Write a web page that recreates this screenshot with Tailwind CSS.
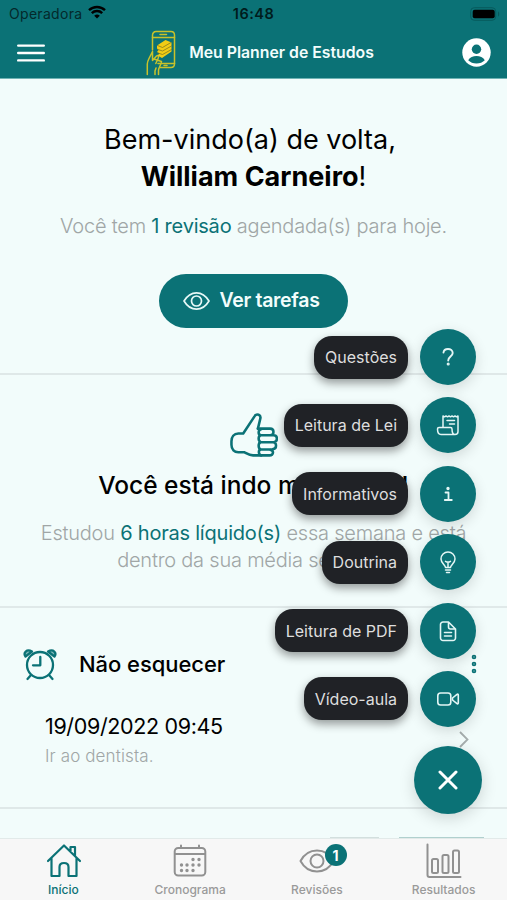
<!DOCTYPE html>
<html lang="pt-BR">
<head>
    <meta charset="UTF-8">
    <meta name="viewport" content="width=device-width, initial-scale=1.0">
    <title>Meu Planner de Estudos</title>
    <script src="https://cdn.jsdelivr.net/npm/@tailwindcss/browser@4"></script>
</head>
<body class="bg-[#f2fcfb] font-['Inter',sans-serif] text-black">
    <div class="relative flex flex-col h-[900px] w-[507px] overflow-hidden">

        <header class="h-[79px] shrink-0 bg-[#0b7276] border-b border-[#6fb3b4]">
            <!-- Status bar -->
            <div class="grid grid-cols-3 items-center h-[27px] pl-[9px] pr-[6px] text-[14px]">
                <div class="flex items-center gap-[6px] text-[#04292b] tracking-[0.3px]">
                    <span>Operadora</span>
                    <svg class="w-[18px] h-[14px] -mt-[3px]" viewBox="0 0 18 14" fill="none" stroke="#000" stroke-width="2.4">
                        <path d="M1 5.2a11.5 11.5 0 0 1 16 0M3.8 8.2a7.4 7.4 0 0 1 10.4 0"/>
                        <path d="M9 13.5 6.2 10.8a4 4 0 0 1 5.6 0z" fill="#000" stroke="none"/>
                    </svg>
                </div>
                <div class="text-center pr-[3px] text-[14.500px] tracking-[0.5px] font-semibold text-[#001c1d]">16:48</div>
                <svg class="justify-self-end w-[31px] h-[14px]" viewBox="0 0 31 14">
                    <rect x=".7" y=".7" width="25" height="12.6" rx="3.6" fill="none" stroke="#075a5d"/>
                    <rect x="2.7" y="2.7" width="22" height="8.6" rx="2" fill="#000"/>
                    <path d="M28 4.5c1.6.6 1.6 4.4 0 5z" fill="#075a5d"/>
                </svg>
            </div>
            <!-- Toolbar -->
            <div class="flex items-center justify-between h-[51px] pl-[17px] pr-[16px]">
                <svg class="w-[28px] h-[18px]" viewBox="0 0 28 18" stroke="#fff" stroke-width="2.4" stroke-linecap="round">
                    <path d="M1.2 1.6h25.6M1.2 9h25.6M1.2 16.4h25.6"/>
                </svg>
                <div class="flex items-center gap-[13px] pl-[13px]">
                    <svg class="w-[30px] h-[46px]" viewBox="0 0 30 46" fill="none" stroke="#c9c22a" stroke-width="1.5" stroke-linejoin="round" stroke-linecap="round">
                        <path d="M6.5 20V5.2A3.6 3.6 0 0 1 10 1.5h15A3.6 3.6 0 0 1 28.5 5v29a3.6 3.6 0 0 1-3.6 3.5H14"/>
                        <path d="M6.5 7.5h22M12 33.5h16.5M14 4.5h6.5M18 35.5h3"/>
                        <path d="M1.3 44.5V34c0-2 .7-3.500 1.700-5.500l3.500-7v9M6.500 30.500l4-4.500c1.500-1 2.500.5 1.800 2l-2.500 5.500M8 29l7.500 2.500c-.5 4-3 6-3 9v4M10 38l-1 3v3.500"/>
                        <path d="M11 15.500l8.500-5.500 6 2.500v9L16 28l-4.500-2.500 2-2-2.500-1.500 1.500-2-1.500-1.500z" fill="#f0cc15" stroke="none"/>
                        <path d="M11.500 15.500l5 2 8.500-5M12 19.500l4.500 1.500 9-5M12 23l4.500 1.500 9-5" stroke="#746f20" stroke-width=".7"/>
                    </svg>
                    <h1 class="text-[15.800px] font-semibold text-[#f2fdfc] whitespace-nowrap">Meu Planner de Estudos</h1>
                </div>
                <svg class="w-[29px] h-[29px]" viewBox="0 0 29 29">
                    <circle cx="14.500" cy="14.500" r="14.200" fill="#fff"/>
                    <circle cx="14.500" cy="11.300" r="4.700" fill="#0b7276"/>
                    <path d="M6.200 22.200c1.600-3 4.900-4.200 8.300-4.200s6.700 1.200 8.300 4.200c-2 2-5 3.300-8.300 3.300s-6.300-1.300-8.300-3.300z" fill="#0b7276"/>
                </svg>
            </div>
        </header>

        <main class="flex-1 overflow-hidden">
            <section class="flex flex-col items-center h-[296px] pt-[42px] border-b-2 border-[#dfe8e8]">
                <h2 class="text-[27px] leading-[37px] text-center whitespace-nowrap pr-[7px]">Bem-vindo(a) de volta,</h2>
                <h2 class="text-[27px] leading-[37px] text-center whitespace-nowrap"><b class="font-bold">William Carneiro</b>!</h2>
                <p class="mt-[17px] text-[20px] leading-[28px] tracking-[-0.220px] font-light text-[#a0a6a6] whitespace-nowrap">Você tem <span class="font-normal text-[#0b7276]">1 revisão</span> agendada(s) para hoje.</p>
                <button class="flex items-center justify-center gap-[9px] mt-[34px] w-[189px] h-[54px] pr-[4px] rounded-full bg-[#0b7276] text-[#f2fdfc] text-[19.500px] tracking-[-0.300px] font-semibold">
                    <svg class="w-[27px] h-[20px]" viewBox="0 0 27 20" fill="none" stroke="#e6f8f7" stroke-width="1.700">
                        <path d="M1 10C4 5 8.500 1.800 13.500 1.800S23 5 26 10c-3 5-7.500 8.200-12.500 8.200S4 15 1 10z" stroke-linejoin="round"/>
                        <circle cx="13.500" cy="10" r="5"/>
                    </svg>
                    Ver tarefas
                </button>
            </section>

            <section class="flex flex-col items-center h-[233px] pt-[36px] border-b-2 border-[#e0e9e9]">
                <svg class="w-[49px] h-[48px]" viewBox="0 0 50 48" fill="none" stroke="#0b7276" stroke-width="2.600" stroke-linejoin="round" stroke-linecap="round">
                    <path d="M29.500 17.500 32 7c.8-3.500-3.800-5.500-5.800-2.300L14.500 22.500H9.500c-4.500 0-7 3.500-7 8v3.500c0 5 3 7.500 7 7.500h6c3 1.500 5 3.300 9 3.300h17c4 0 4.500-5 1-5.500"/>
                    <path d="M29.500 17.500H42c4.500 0 4.500 6.800 0 6.800M31 24.300h14.500c4.500 0 4.500 7 0 7M31 31.300h14c4 0 4 7 0 7M31 38.800h13M33 18c-3 0-4 5.500-.5 6.300-3 .7-3 6 0 7-3 .7-3 6.300 0 7.500-3 .5-2.500 5.500.5 6"/>
                </svg>
                <h3 class="mt-[9px] text-[24.500px] leading-[34px] font-medium whitespace-nowrap">Você está indo muito bem!</h3>
                <p class="mt-[18px] text-[20px] leading-[27px] tracking-[-0.220px] font-light text-[#a0a6a6] text-center whitespace-nowrap">Estudou <span class="font-normal text-[#0b7276]">6 horas líquido(s)</span> essa semana e está<br>dentro da sua média semanal.</p>
            </section>

            <section class="h-[201px] pt-[38px] pl-[23px] pr-[30px] border-b-2 border-[#dfe8e8]">
                <div class="flex items-center h-[36px]">
                    <svg class="w-[34px] h-[34px]" viewBox="0 0 34 34" fill="none" stroke="#0b7276" stroke-width="2.300" stroke-linecap="round" stroke-linejoin="round">
                        <circle cx="17" cy="18" r="13"/>
                        <path d="M17.300 10v8.300H10M8 28l-3.500 4M26 28l3.500 4"/>
                        <path d="M2.500 9.500C0 6 3.500 1.500 9 4.500z M31.500 9.500C34 6 30.500 1.500 25 4.500z" fill="#7fb9ba"/>
                    </svg>
                    <h3 class="ml-[22px] text-[22px] font-medium tracking-[-0.060px]">Não esquecer</h3>
                    <svg class="ml-auto w-[6px] h-[20px]" viewBox="0 0 6 20" fill="#7fb9ba" stroke="#0b7276" stroke-width="1.600">
                        <circle cx="3" cy="3" r="1.500"/><circle cx="3" cy="10" r="1.500"/><circle cx="3" cy="17" r="1.500"/>
                    </svg>
                </div>
                <div class="flex items-center justify-between mt-[29px] pl-[22px] pr-[8px]">
                    <div>
                        <p class="text-[21.500px] leading-[30px] tracking-[-0.360px]">19/09/2022 09:45</p>
                        <p class="mt-[3px] text-[17px] leading-[24px] tracking-[0.120px] font-light text-[#a0a6a6]">Ir ao dentista.</p>
                    </div>
                    <svg class="w-[10px] h-[18px]" viewBox="0 0 10 18" fill="none" stroke="#a5adad" stroke-width="1.800"><path d="M1 1 8.500 8.500 1 16"/></svg>
                </div>
            </section>

            <!-- Top edge of the next card -->
            <section class="flex items-end justify-end gap-[20px] h-[29px] pr-[23px]">
                <div class="w-[49px] h-px bg-[#d3dfde]"></div>
                <div class="w-[85px] h-px bg-[#b0d0ce]"></div>
            </section>
        </main>

        <nav class="grid grid-cols-4 h-[62px] shrink-0 bg-[#f7f7f7] border-t border-[#e2eae9] text-[12px] font-medium text-[#9a9a9a]">
            <a class="flex flex-col items-center text-[#0b7276]">
                <svg class="mt-[4px] ml-[2px] w-[36px] h-[36px]" viewBox="0 0 36 36" fill="none" stroke="#0b7276" stroke-width="2.200" stroke-linecap="round" stroke-linejoin="round">
                    <path d="M2 18 18 2.500 34 18M5.500 15v18h8V24c0-3 1.500-4 4.500-4s4.500 1 4.500 4v9h8V15M24.500 8V4h4.500v8.500"/>
                </svg>
                <span class="mt-[3px] leading-[16px]">Início</span>
            </a>
            <a class="flex flex-col items-center">
                <svg class="mt-[4px] w-[36px] h-[36px]" viewBox="0 0 36 36" fill="none" stroke="#919191" stroke-width="2" stroke-linecap="round">
                    <rect x="2.700" y="5" width="30.600" height="27.500" rx="3.500"/>
                    <path d="M3 11h30M9 2.500V5M27 2.500V5"/>
                    <path d="M21 16.500h.01M27 16.500h.01M9.500 22h.01M15 22h.01M21 22h.01M27 22h.01M9.500 27.500h.01M15 27.500h.01M21 27.500h.01" stroke-width="3.400"/>
                </svg>
                <span class="mt-[3px] leading-[16px]">Cronograma</span>
            </a>
            <a class="relative flex flex-col items-center">
                <svg class="mt-[4px] w-[36px] h-[36px]" viewBox="0 0 36 36" fill="none" stroke="#919191" stroke-width="2" stroke-linejoin="round">
                    <path d="M1.500 18C5 11.500 11 7.500 18 7.500s13 4 16.500 10.500C31 24.500 25 28.500 18 28.500S5 24.500 1.500 18z"/>
                    <circle cx="18" cy="18" r="6.500"/>
                </svg>
                <span class="absolute left-[71px] top-[5px] flex items-center justify-center w-[22px] h-[22px] rounded-full bg-[#0b7276] text-[14px] font-bold text-white">1</span>
                <span class="mt-[3px] leading-[16px]">Revisões</span>
            </a>
            <a class="flex flex-col items-center">
                <svg class="mt-[4px] w-[36px] h-[36px]" viewBox="0 0 36 36" fill="none" stroke="#919191" stroke-width="2" stroke-linecap="round">
                    <path d="M1.500 1.500v30.500a2 2 0 0 0 2 2h31"/>
                    <rect x="6" y="16" width="6" height="14" rx="1.500"/>
                    <rect x="16.500" y="12" width="6" height="18" rx="1.500"/>
                    <rect x="27" y="7.500" width="6" height="22.500" rx="1.500"/>
                </svg>
                <span class="mt-[3px] leading-[16px]">Resultados</span>
            </a>
        </nav>

        <!-- Floating action menu -->
        <div class="absolute right-[25px] top-[329px] flex flex-col items-end text-[16px] text-[#dedede]">
            <div class="flex flex-col items-end gap-[12.400px] pr-[6px]">
                <div class="flex items-center gap-[12px]">
                    <span class="flex items-center h-[43px] px-[11px] rounded-[18px] bg-[#202226] shadow-[0_4px_10px_rgba(0,0,0,0.4)]">Questões</span>
                    <span class="flex items-center justify-center w-[56px] h-[56px] rounded-full bg-[#0b7276] shadow-[0_4px_14px_rgba(0,0,0,0.14)]">
                        <svg class="w-[24px] h-[24px]" viewBox="0 0 24 24" fill="none" stroke="#e4f6f5" stroke-width="1.900" stroke-linecap="round"><path d="M7.500 7.500C7.800 5 9.500 4 12 4s4.700 1.500 4.700 4c0 3.500-4.500 3.700-4.500 7.500"/><circle cx="12.200" cy="19" r=".6" fill="#e4f6f5"/></svg>
                    </span>
                </div>
                <div class="flex items-center gap-[12px]">
                    <span class="flex items-center h-[43px] px-[11px] rounded-[18px] bg-[#202226] shadow-[0_4px_10px_rgba(0,0,0,0.4)]">Leitura de Lei</span>
                    <span class="flex items-center justify-center w-[56px] h-[56px] rounded-full bg-[#0b7276] shadow-[0_4px_14px_rgba(0,0,0,0.14)]">
                        <svg class="w-[24px] h-[24px]" viewBox="0 0 24 24" fill="none" stroke="#e4f6f5" stroke-width="1.500" stroke-linejoin="round" stroke-linecap="round"><path d="M7 14.500V3l1.500.8L10 3l1.500.8L13 3l1.500.8L16 3l1.500.8L19 3l1.500.8L22 3v15.500a3 3 0 0 1-3 3H5c-2.500 0-3.500-2-3.500-5.500 0-.8.500-1.500 1.500-1.500h11.500c1 0 1.500.5 1.500 1.500 0 3 .500 5.500 3 5.500M11 7.500h7.500M13.500 11h5"/></svg>
                    </span>
                </div>
                <div class="flex items-center gap-[12px]">
                    <span class="flex items-center h-[43px] px-[11px] rounded-[18px] bg-[#202226] shadow-[0_4px_10px_rgba(0,0,0,0.4)]">Informativos</span>
                    <span class="flex items-center justify-center w-[56px] h-[56px] rounded-full bg-[#0b7276] shadow-[0_4px_14px_rgba(0,0,0,0.14)]">
                        <svg class="w-[24px] h-[24px]" viewBox="0 0 24 24" fill="none" stroke="#e4f6f5" stroke-width="1.800" stroke-linecap="round" stroke-linejoin="round"><path d="M9.500 10.500h3V18M8.800 18h7"/><circle cx="12" cy="6.500" r=".8" fill="#e4f6f5"/></svg>
                    </span>
                </div>
                <div class="flex items-center gap-[12px]">
                    <span class="flex items-center h-[43px] px-[11px] rounded-[18px] bg-[#202226] shadow-[0_4px_10px_rgba(0,0,0,0.4)]">Doutrina</span>
                    <span class="flex items-center justify-center w-[56px] h-[56px] rounded-full bg-[#0b7276] shadow-[0_4px_14px_rgba(0,0,0,0.14)]">
                        <svg class="w-[24px] h-[24px]" viewBox="0 0 24 24" fill="none" stroke="#e4f6f5" stroke-width="1.500" stroke-linecap="round" stroke-linejoin="round"><path d="M12 17.500V12M9.500 11.300c1.500 1 3.500 1 5 0M9.500 17.500c0-2.500-4.500-4-4.500-8.500a7 7 0 0 1 14 0c0 4.500-4.500 6-4.500 8.500zM9.500 20h5M10.500 22.500h3"/></svg>
                    </span>
                </div>
                <div class="flex items-center gap-[12px]">
                    <span class="flex items-center h-[43px] px-[11px] rounded-[18px] bg-[#202226] shadow-[0_4px_10px_rgba(0,0,0,0.4)]">Leitura de PDF</span>
                    <span class="flex items-center justify-center w-[56px] h-[56px] rounded-full bg-[#0b7276] shadow-[0_4px_14px_rgba(0,0,0,0.14)]">
                        <svg class="w-[24px] h-[24px]" viewBox="0 0 24 24" fill="none" stroke="#e4f6f5" stroke-width="1.600" stroke-linecap="round" stroke-linejoin="round"><path d="M19.500 10v9a2.500 2.500 0 0 1-2.500 2.500H7A2.500 2.500 0 0 1 4.500 19V5.500A2.500 2.500 0 0 1 7 3h5.500zM12.500 3v5a2 2 0 0 0 2 2h5M8.500 13.500h7M8.500 17h7"/></svg>
                    </span>
                </div>
                <div class="flex items-center gap-[12px]">
                    <span class="flex items-center h-[43px] px-[11px] rounded-[18px] bg-[#202226] shadow-[0_4px_10px_rgba(0,0,0,0.4)]">Vídeo-aula</span>
                    <span class="flex items-center justify-center w-[56px] h-[56px] rounded-full bg-[#0b7276] shadow-[0_4px_14px_rgba(0,0,0,0.14)]">
                        <svg class="w-[24px] h-[24px]" viewBox="0 0 24 24" fill="none" stroke="#e4f6f5" stroke-width="1.600" stroke-linejoin="round"><rect x="1.800" y="6" width="13" height="12" rx="2.800"/><path d="M16.500 11v2l4.500 3.700c.6.400 1.300 0 1.300-.7V8c0-.7-.7-1.100-1.300-.7z"/></svg>
                    </span>
                </div>
            </div>
            <button class="flex items-center justify-center mt-[19px] w-[68px] h-[68px] rounded-full bg-[#0b7276] shadow-[0_4px_16px_rgba(0,0,0,0.16)]">
                <svg class="w-[20px] h-[20px]" viewBox="0 0 20 20" stroke="#fff" stroke-width="3" stroke-linecap="round"><path d="M2 2l16 16M18 2 2 18"/></svg>
            </button>
        </div>
    </div>
</body>
</html>
